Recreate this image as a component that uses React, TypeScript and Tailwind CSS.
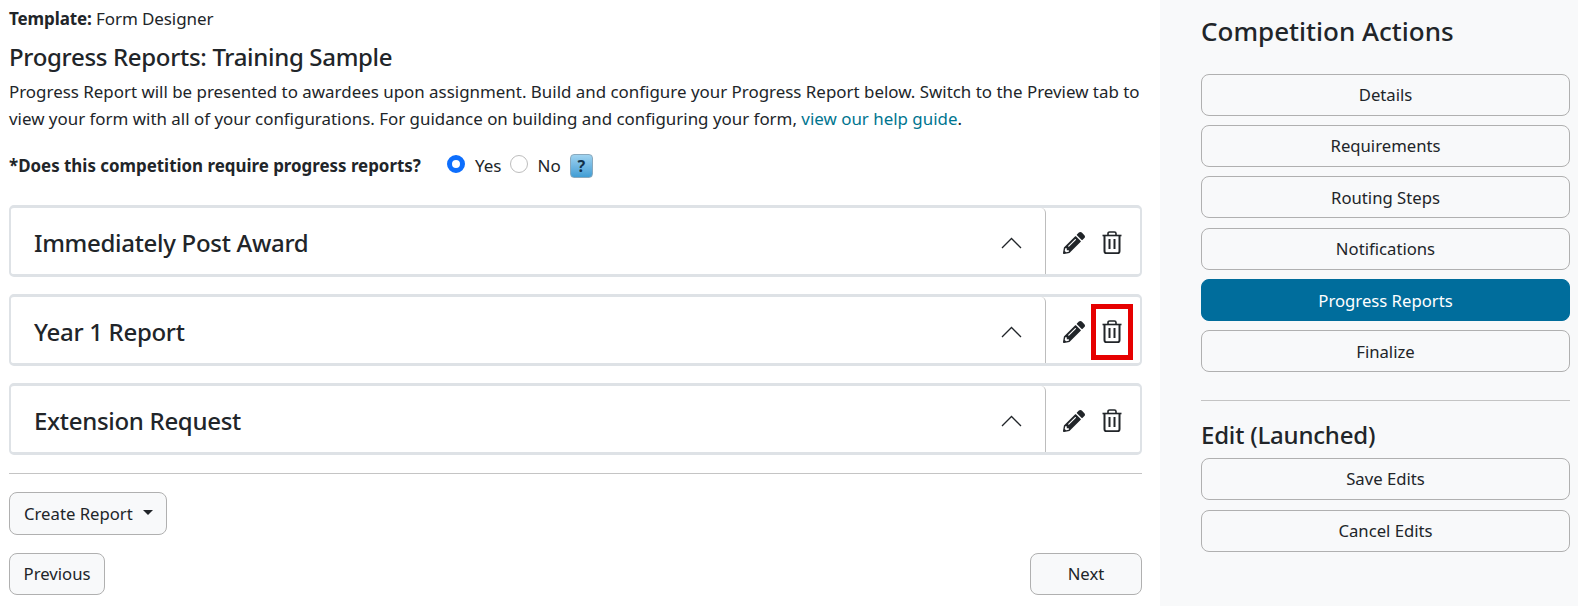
function PencilIcon() {
    return (
        <svg className="h-[22px] w-[22px]" viewBox="0 0 512 512" fill="#212529">
            <path d="M497.9 142.1l-46.1 46.1c-4.7 4.7-12.3 4.7-17 0l-111-111c-4.7-4.7-4.7-12.3 0-17l46.1-46.1c18.7-18.7 49.1-18.7 67.9 0l60.1 60.1c18.8 18.7 18.8 49.1 0 67.9zM284.2 99.8L21.6 362.4.4 483.9c-2.9 16.4 11.4 30.6 27.8 27.8l121.5-21.3 262.6-262.6c4.7-4.7 4.7-12.3 0-17l-111-111c-4.8-4.7-12.4-4.7-17.1 0zM124.1 339.9c-5.5-5.5-5.5-14.3 0-19.8l154-154c5.5-5.5 14.3-5.5 19.8 0s5.5 14.3 0 19.8l-154 154c-5.5 5.5-14.3 5.5-19.8 0zM88 424h48v36.3l-64.5 11.3-31.1-31.1L51.7 376H88v48z" />
        </svg>
    )
}

function TrashIcon() {
    return (
        <svg className="h-[23px] w-[20px]" viewBox="0 0 20 23" fill="none" stroke="#212529" strokeWidth="2">
            <path d="M0.5 4.5h19" strokeWidth="1.6" />
            <path d="M6 4.5V2.6C6 1.6 6.7 1 7.6 1h4.8c.9 0 1.6.6 1.6 1.6v1.9" strokeWidth="1.6" />
            <path d="M2.5 4.5v15.8c0 1.2.8 1.9 1.9 1.9h11.2c1.1 0 1.9-.7 1.9-1.9V4.5" />
            <path d="M7.5 8v10M12.5 8v10" />
        </svg>
    )
}

function ChevronIcon() {
    return (
        <svg className="h-[12px] w-[21px]" viewBox="0 0 21 12" fill="none" stroke="#212529" strokeWidth="1.3">
            <path d="M1 11 10.5 1.5 20 11" />
        </svg>
    )
}

function ReportRow({ title, highlight, className }: { title: string; highlight?: boolean; className?: string }) {
    return (
        <div className={`flex h-[72px] rounded-[5px] border-x-[2px] border-t-[3px] border-b-[3px] border-[#dee2e6] bg-white ${className ?? ''}`}>
            <div className="flex min-w-0 flex-1 items-center justify-between rounded-tr-[5px] border-r border-[#bdbdbd] pt-[4px] pl-[23px] pr-[23px]">
                <h3 className="text-[24px] leading-none font-medium text-[#212529] tracking-[-0.3px]">{title}</h3>
                <ChevronIcon />
            </div>
            <div className="flex w-[94px] shrink-0 items-center pt-[3px] pl-[17px]">
                <PencilIcon />
                <div className={`ml-[6px] flex h-[56px] w-[42px] items-center justify-center ${highlight ? 'border-[5px] border-[#e60000]' : ''}`}>
                    <TrashIcon />
                </div>
            </div>
        </div>
    )
}

function SideButton({ label, active, className }: { label: string; active?: boolean; className?: string }) {
    return (
        <button
            type="button"
            className={`flex h-[42px] w-full items-center justify-center rounded-[8px] border text-[16.7px] ${active ? 'border-[#006d9c] bg-[#006d9c] text-white' : 'border-[#b0b0b0] bg-[#f8f9fa] text-[#212529]'} ${className ?? ''}`}
        >
            {label}
        </button>
    )
}

export default function App() {
    return (
        <div className="flex h-[606px] w-[1578px] overflow-hidden bg-white font-['Noto_Sans',sans-serif] text-[16.7px] text-[#212529]">
            <main className="w-[1160px] shrink-0 pl-[9px] pr-[18px]">
                <p className="mt-[7px] text-[17px] leading-[24px] tracking-[-0.1px]"><b className="font-bold">Template:</b> Form Designer</p>
                <h2 className="mt-[11px] text-[24px] leading-[29px] font-medium tracking-[-0.32px]">Progress Reports: Training Sample</h2>
                <p className="mt-[7px] text-[16.92px] leading-[27px]">
                    Progress Report will be presented to awardees upon assignment. Build and configure your Progress Report below. Switch to the Preview tab to view your form with all of your configurations. For guidance on building and configuring your form, <a className="text-[#00758f]">view our help guide</a>.
                </p>
                <div className="mt-[20px] flex h-[28px] items-center">
                    <b className="w-[438px] text-[16.9px] font-bold">*Does this competition require progress reports?</b>
                    <span className="mb-[5px] h-[18px] w-[18px] rounded-full border-[5px] border-[#0d6efd] bg-white" />
                    <span className="ml-[10px] text-[17px]">Yes</span>
                    <span className="mb-[5px] ml-[8px] h-[18px] w-[18px] rounded-full border border-[#bdbdbd] bg-white" />
                    <span className="ml-[10px] text-[17px]">No</span>
                    <span className="ml-[9px] flex h-[24px] w-[23px] items-center justify-center rounded-[4px] border border-[#8aa9bd] bg-gradient-to-b from-[#9fd3f0] to-[#3f9dd4] text-[16px] font-bold text-[#12314a]">?</span>
                </div>
                <ReportRow title="Immediately Post Award" className="mt-[25px]" />
                <ReportRow title="Year 1 Report" highlight className="mt-[17px]" />
                <ReportRow title="Extension Request" className="mt-[17px]" />
                <hr className="mt-[18px] border-[#c4c4c4]" />
                <button type="button" className="mt-[18px] flex h-[43px] items-center rounded-[8px] border border-[#b0b0b0] bg-[#f8f9fa] pl-[14px] pr-[13px]">
                    Create Report
                    <span className="ml-[10px] mb-[3px] h-0 w-0 border-x-[5px] border-t-[5px] border-x-transparent border-t-[#212529]" />
                </button>
                <div className="mt-[18px] flex justify-between">
                    <button type="button" className="h-[42px] w-[96px] rounded-[8px] border border-[#b0b0b0] bg-[#f8f9fa]">Previous</button>
                    <button type="button" className="h-[42px] w-[112px] rounded-[8px] border border-[#b0b0b0] bg-[#f8f9fa]">Next</button>
                </div>
            </main>
            <aside className="flex-1 bg-[#f8f9fa] pl-[41px] pr-[8px]">
                <h2 className="mt-[14px] text-[26px] leading-[35px] font-medium">Competition Actions</h2>
                <div className="mt-[24.5px] flex flex-col gap-[9.4px]">
                    <SideButton label="Details" />
                    <SideButton label="Requirements" />
                    <SideButton label="Routing Steps" />
                    <SideButton label="Notifications" />
                    <SideButton label="Progress Reports" active />
                    <SideButton label="Finalize" />
                </div>
                <hr className="mt-[27.5px] border-[#c4c4c4]" />
                <h3 className="mt-[17px] text-[24px] leading-[33px] font-medium tracking-[-0.2px]">Edit (Launched)</h3>
                <div className="mt-[7px] flex flex-col gap-[10px]">
                    <SideButton label="Save Edits" />
                    <SideButton label="Cancel Edits" />
                </div>
            </aside>
        </div>
    )
}
